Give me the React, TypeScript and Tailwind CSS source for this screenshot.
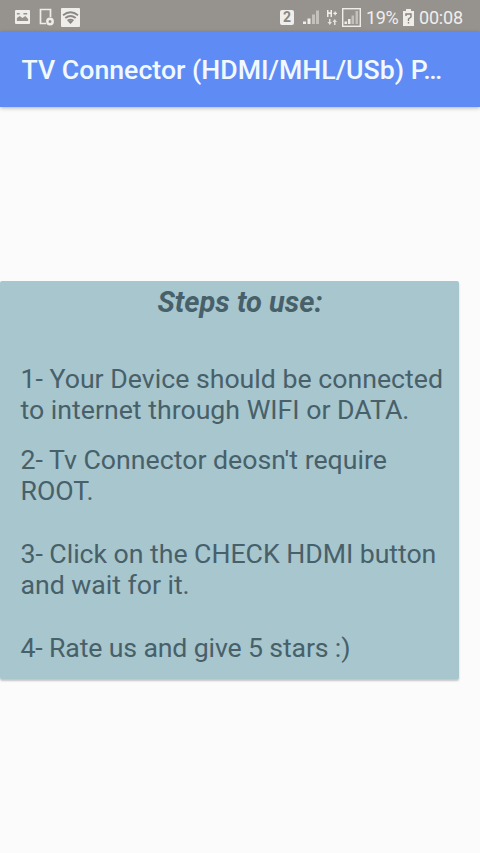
const steps = [
  { text: ["1- Your Device should be connected", "to internet through WIFI or DATA."], style: "mt-[45.5px]" },
  { text: ["2- Tv Connector deosn't require", "ROOT."], style: "mt-[18.5px]" },
  { text: ["3- Click on the CHECK HDMI button", "and wait for it."], style: "mt-[31.5px] tracking-[-0.04px]" },
  { text: ["4- Rate us and give 5 stars :)"], style: "mt-[31.5px] tracking-[-0.15px]" },
];

export default function App() {
  return (
    <div className="flex h-[853px] w-[480px] flex-col overflow-hidden bg-[#fbfbfb] font-['Roboto',sans-serif]">
      <StatusBar />
      <header className="flex h-[75px] shrink-0 items-center bg-[#5f8cf4] pt-[2px] pl-[21.5px] shadow-[0_1px_4px_rgba(0,0,0,0.3)]">
        <h1 className="whitespace-nowrap text-[26.7px] font-medium text-[#f1f9ff]">
          TV Connector (HDMI/MHL/USb) P…
        </h1>
      </header>
      <main className="mt-[174px] h-[398px] w-[459px] shrink-0 rounded-[2px] bg-[#a7c6ce] pt-[6px] text-[26.7px] leading-[31.3px] text-[#486069] shadow-[0_2px_2px_rgba(0,0,0,0.22)]">
        <h2 className="pl-[21px] text-center text-[29px] leading-[31.3px] font-bold italic">Steps to use:</h2>
        {steps.map((step) => (
          <p key={step.text[0]} className={`pl-[20.5px] whitespace-nowrap ${step.style}`}>
            {step.text.map((line) => (
              <span key={line} className="block">{line}</span>
            ))}
          </p>
        ))}
      </main>
    </div>
  );
}

function StatusBar() {
  return (
    <div className="flex h-8 shrink-0 items-center bg-[#96928e] pt-[2px] text-[18px] text-[#f0eeeb]">
      <svg className="ml-[15px] h-[14px] w-[15px] shrink-0" viewBox="0 0 16 14" preserveAspectRatio="none">
        <rect width="16" height="14" rx="1" fill="#efedea" />
        <path d="M2 11V8l3-2 3 2 3-2 3 3v2z" fill="#96928e" />
        <path d="M2 3h3v1.5H2zM9 3h4v1.5H9z" fill="#96928e" />
      </svg>
      <svg className="ml-[9px] h-[18px] w-[15px] shrink-0" viewBox="0 0 15 18" fill="none" stroke="#efedea">
        <path d="M11.500 9V1.500H1.500v14H7" strokeWidth="1.700" />
        <circle cx="11" cy="13.500" r="2.700" strokeWidth="2.400" />
      </svg>
      <svg className="ml-[7px] h-[19px] w-[19px] shrink-0" viewBox="0 0 19 19">
        <rect width="19" height="19" rx="1" fill="#efedea" />
        <g fill="none" stroke="#8b8783" strokeWidth="1.8">
          <path d="M2 7.200Q9.500 1.200 17 7.200M4.300 10Q9.500 6 14.700 10M6.500 12.700Q9.500 10.500 12.500 12.700" />
        </g>
        <path d="m7 13.500 2.500-1.200 2.500 1.200L9.500 16z" fill="#8b8783" />
      </svg>
      <span className="ml-[200px] flex h-[15px] w-[14px] shrink-0 items-center justify-center rounded-[2px] bg-[#f0eeeb] text-[14px] font-bold text-[#8b8783]">
        2
      </span>
      <svg className="ml-[9px] h-4 w-4 shrink-0" viewBox="0 0 16 16" fill="#efedea">
        <path d="M0 12.500h3V15H0zM4.500 9.500h3V15h-3z" />
        <path d="M9 5.500h3V15H9zM13 1.500h3V15h-3z" opacity=".5" />
      </svg>
      <svg className="ml-[7px] h-[18px] w-3 shrink-0" viewBox="0 0 12 18" fill="#efedea">
        <path d="M1 2h1.500v2.300h2V2H6v7H4.500V6h-2v3H1zM8.500 3.500h1.300v1.300H11V6H9.800v1.300H8.500V6H7.300V4.800h1.200z" />
        <path d="M3 11h1.500v3H6l-2.200 3L1.500 14H3zM8 17v-3H6.500l2.200-3 2.300 3H9.500v3z" opacity=".85" />
      </svg>
      <svg className="ml-1 h-[19px] w-[19px] shrink-0" viewBox="0 0 19 19" fill="#efedea">
        <rect x=".7" y=".7" width="17.600" height="17.600" fill="none" stroke="#efedea" strokeWidth="1.400" />
        <path d="M2.500 13.500h2.500V16H2.500zM6 11h2.500v5H6z" />
        <path d="M9.500 7.500H12V16H9.500zM13.500 3H16v13h-2.500z" opacity=".5" />
      </svg>
      <span className="ml-[5px] w-[33px] tracking-[-0.4px]">19%</span>
      <svg className="ml-[4px] h-[17px] w-[11px] shrink-0" viewBox="0 0 11 17">
        <path d="M3 0h5v2h3v15H0V2h3z" fill="#efedea" />
        <path d="M3 7V5h5v3L5.500 10v2M5.500 13v1.500" fill="none" stroke="#85817d" strokeWidth="1.400" />
      </svg>
      <span className="ml-[5px] tracking-[-0.2px]">00:08</span>
    </div>
  );
}
